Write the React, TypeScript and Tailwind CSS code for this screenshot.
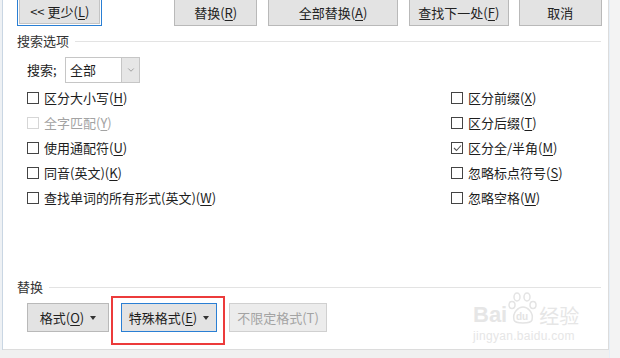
import { ChevronDown } from 'lucide-react';

const font = "font-['Noto_Sans_CJK_SC','Microsoft_YaHei',sans-serif]";

// label with an underlined access key, e.g. 更少(L)
function Mn({ text, k, dim }: { text: string; k: string; dim?: boolean }) {
   return (
      <span className={dim ? 'text-[#a3a3a3]' : ''}>
         {text}(<span className="underline underline-offset-2">{k}</span>)
      </span>
   );
}

function Btn({ w, children, focus, disabled, className = '' }: { w: string; children: React.ReactNode; focus?: boolean; disabled?: boolean; className?: string }) {
   return (
      <div
         className={`${w} ${className} flex items-center justify-center gap-[6px] border text-[13px] ${
            focus ? 'border-[#2a7fd4] bg-[#e3e3e3]' : disabled ? 'border-[#d0d0d0] bg-[#ececec] text-[#a3a3a3]' : 'border-[#b9b9b9] bg-[#e3e3e3] text-[#222]'
         }`}
      >
         {children}
      </div>
   );
}

const Caret = () => <span className="inline-block w-0 h-0 border-l-[3px] border-r-[3px] border-t-[4px] border-l-transparent border-r-transparent border-t-[#333]" />;

function Check({ label, k, checked, dim }: { label: string; k: string; checked?: boolean; dim?: boolean }) {
   return (
      <div className="flex items-center h-[25px] text-[13px]">
         <span className={`w-[12px] h-[12px] border bg-white flex items-center justify-center mr-[5px] ${dim ? 'border-[#d6d6d6]' : 'border-[#444]'}`}>
            {checked && (
               <svg width="9" height="8" viewBox="0 0 9 8">
                  <path d="M1 4 L3.5 6.5 L8 1.5" fill="none" stroke="#555" strokeWidth="1.1" />
               </svg>
            )}
         </span>
         <Mn text={label} k={k} dim={dim} />
      </div>
   );
}

export default function App() {
   return (
      <div className={`${font} w-[620px] h-[358px] bg-[#f0f0f0] overflow-hidden flex text-[#1d1d1d]`}>
         <div className="w-[3px] h-[350px] border-r border-[#c9d6e3] bg-[#eef1f4]" />
         <div className="relative w-[606px] h-[350px] bg-white border-r border-b border-[#dcdcdc] pl-[14px] pr-[6px]">
            {/* top buttons */}
            <div className="flex h-[26px] items-end">
               <div className="w-[86px] h-[30px] border border-[#2a7fd4] p-[1px] -mt-[4px]">
                  <div className="w-full h-full border border-[#c4c4c4] bg-[#e3e3e3] flex items-center justify-center text-[13px] pt-[2px]">
                     <span>&lt;&lt; 更少(<span className="underline underline-offset-2">L</span>)</span>
                  </div>
               </div>
               <Btn w="w-[83px]" className="h-[30px] ml-[72px] pt-[3px]"><Mn text="替换" k="R" /></Btn>
               <Btn w="w-[131px]" className="h-[30px] ml-[11px] pt-[3px]"><Mn text="全部替换" k="A" /></Btn>
               <Btn w="w-[100px]" className="h-[30px] ml-[11px] pt-[3px]"><Mn text="查找下一处" k="F" /></Btn>
               <Btn w="w-[84px]" className="h-[30px] ml-[10px] pt-[3px]">取消</Btn>
            </div>

            {/* 搜索选项 */}
            <div className="flex items-center h-[16px] mt-[7px] text-[13px] text-[#333]">
               <span>搜索选项</span>
               <div className="flex-1 h-px bg-[#e3e3e3] ml-[6px] mr-[1px]" />
            </div>

            <div className="pl-[10px]">
               <div className="flex items-center mt-[8px] h-[26px] text-[13px]">
                  <span className="w-[38px]">搜索;</span>
                  <div className="flex h-[26px] w-[75px] border border-[#c6c6c6]">
                     <div className="flex-1 flex items-center pl-[4px]">全部</div>
                     <div className="w-[18px] bg-[#e6e6e6] border-l border-[#c6c6c6] flex items-center justify-center">
                        <ChevronDown size={10} strokeWidth={1.5} color="#777" />
                     </div>
                  </div>
               </div>

               <div className="flex mt-[2px]">
                  <div className="w-[424px]">
                     <Check label="区分大小写" k="H" />
                     <Check label="全字匹配" k="Y" dim />
                     <Check label="使用通配符" k="U" />
                     <Check label="同音(英文)" k="K" />
                     <Check label="查找单词的所有形式(英文)" k="W" />
                  </div>
                  <div>
                     <Check label="区分前缀" k="X" />
                     <Check label="区分后缀" k="T" />
                     <Check label="区分全/半角" k="M" checked />
                     <Check label="忽略标点符号" k="S" />
                     <Check label="忽略空格" k="W" />
                  </div>
               </div>
            </div>

            {/* 替换 */}
            <div className="flex items-center h-[16px] mt-[69px] text-[13px] text-[#333]">
               <span>替换</span>
               <div className="flex-1 h-px bg-[#e3e3e3] ml-[6px] mr-[1px]" />
            </div>
            <div className="flex mt-[8px] pl-[10px]">
               <Btn w="w-[82px]" className="h-[29px]"><Mn text="格式" k="O" /><Caret /></Btn>
               <Btn w="w-[96px]" className="h-[29px] ml-[12px]" focus><Mn text="特殊格式" k="E" /><Caret /></Btn>
               <Btn w="w-[98px]" className="h-[29px] ml-[12px]" disabled>不限定格式(T)</Btn>
            </div>

            {/* red annotation box */}
            <div className="absolute left-[108px] top-[296px] w-[114px] h-[49px] border-2 border-[#ec3b3b]" />

            {/* watermark */}
            <div className="absolute left-[470px] top-[290px] w-[122px] text-[#e6e6e6] font-['Liberation_Sans',sans-serif]">
               <div className="flex items-end h-[36px]">
                  <span className="text-[22px] font-bold leading-none">Bai</span>
                  <svg width="30" height="34" viewBox="0 0 30 34" className="mx-[1px]">
                     <g fill="none" stroke="#e4e4e4" strokeWidth="1.5">
                        <ellipse cx="9" cy="5" rx="3" ry="4" />
                        <ellipse cx="19" cy="5" rx="3" ry="4" />
                        <ellipse cx="4" cy="13" rx="3" ry="3.5" />
                        <ellipse cx="25" cy="13" rx="3" ry="3.5" />
                        <path d="M6 28 C4 20 11 15 15 15 C19 15 26 20 24 28 C23 32 7 32 6 28 Z" />
                     </g>
                     <text x="8" y="28" fontSize="10" fill="#e4e4e4" fontWeight="bold">du</text>
                  </svg>
                  <span className="text-[20px] leading-none font-['Noto_Sans_CJK_SC',sans-serif]">经验</span>
               </div>
               <div className="text-[12px] leading-[16px] mt-[2px] tracking-[0.3px]">jingyan.baidu.com</div>
            </div>
         </div>
         <div className="flex-1 bg-[#f3f3f3] border-l border-[#e6eef6]" />
      </div>
   );
}
